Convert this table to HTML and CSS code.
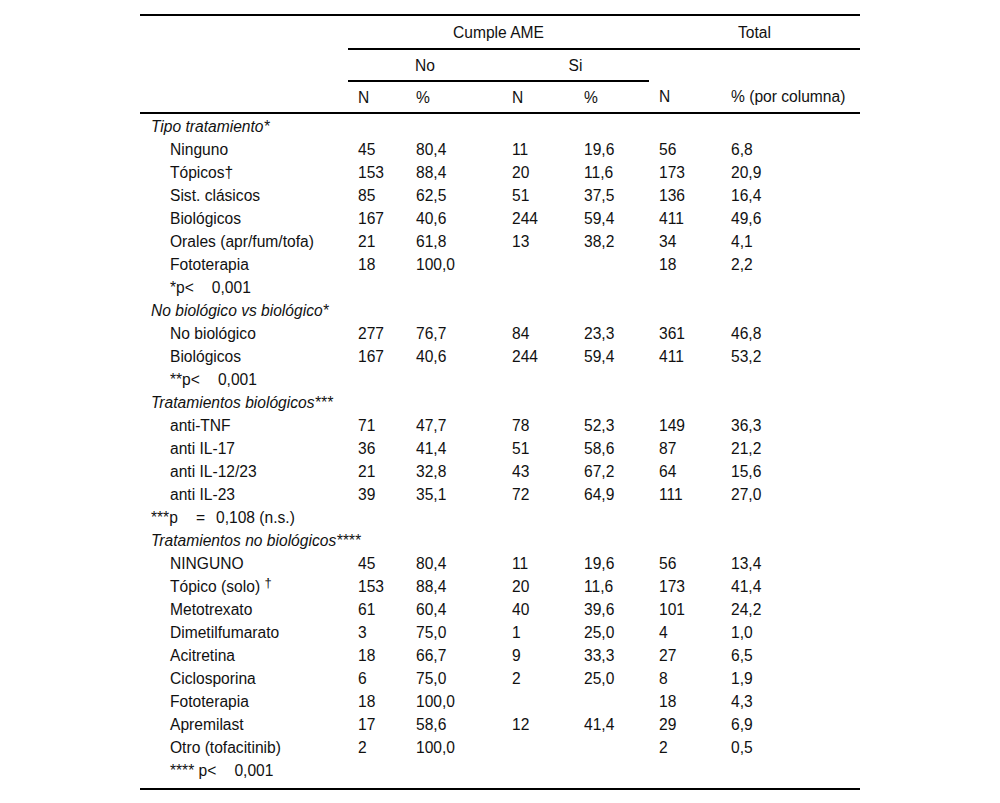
FILE: index.html
```html
<!DOCTYPE html>
<html lang="es">
<head>
<meta charset="utf-8">
<link rel="stylesheet" href="styles.css">
</head>
<body>
<table class="tbl">
  <colgroup>
    <col class="c-label"><col class="c-n1"><col class="c-p1"><col class="c-n2"><col class="c-p2"><col class="c-n3"><col class="c-p3">
  </colgroup>
  <thead>
    <tr class="h1">
      <th></th>
      <th colspan="4" class="ctr line">Cumple AME</th>
      <th colspan="2" class="ctr line">Total</th>
    </tr>
    <tr class="h2">
      <th></th>
      <th colspan="2" class="ctr line">No</th>
      <th colspan="2" class="ctr line">Si</th>
      <th colspan="2"></th>
    </tr>
    <tr class="h3">
      <th></th>
      <th>N</th><th>%</th><th>N</th><th>%</th><th>N</th><th>% (por columna)</th>
    </tr>
  </thead>
  <tbody>
    <tr><td class="grp" colspan="7">Tipo tratamiento*</td></tr>
    <tr><td class="item">Ninguno</td><td>45</td><td>80,4</td><td>11</td><td>19,6</td><td>56</td><td>6,8</td></tr>
    <tr><td class="item">Tópicos†</td><td>153</td><td>88,4</td><td>20</td><td>11,6</td><td>173</td><td>20,9</td></tr>
    <tr><td class="item">Sist. clásicos</td><td>85</td><td>62,5</td><td>51</td><td>37,5</td><td>136</td><td>16,4</td></tr>
    <tr><td class="item">Biológicos</td><td>167</td><td>40,6</td><td>244</td><td>59,4</td><td>411</td><td>49,6</td></tr>
    <tr><td class="item">Orales (apr/fum/tofa)</td><td>21</td><td>61,8</td><td>13</td><td>38,2</td><td>34</td><td>4,1</td></tr>
    <tr><td class="item">Fototerapia</td><td>18</td><td>100,0</td><td></td><td></td><td>18</td><td>2,2</td></tr>
    <tr><td class="item" colspan="7"><span class="pk">*p&lt;</span><span class="pv">0,001</span></td></tr>
    <tr><td class="grp" colspan="7">No biológico vs biológico*</td></tr>
    <tr><td class="item">No biológico</td><td>277</td><td>76,7</td><td>84</td><td>23,3</td><td>361</td><td>46,8</td></tr>
    <tr><td class="item">Biológicos</td><td>167</td><td>40,6</td><td>244</td><td>59,4</td><td>411</td><td>53,2</td></tr>
    <tr><td class="item" colspan="7"><span class="pk">**p&lt;</span><span class="pv">0,001</span></td></tr>
    <tr><td class="grp" colspan="7">Tratamientos biológicos***</td></tr>
    <tr><td class="item">anti-TNF</td><td>71</td><td>47,7</td><td>78</td><td>52,3</td><td>149</td><td>36,3</td></tr>
    <tr><td class="item">anti IL-17</td><td>36</td><td>41,4</td><td>51</td><td>58,6</td><td>87</td><td>21,2</td></tr>
    <tr><td class="item">anti IL-12/23</td><td>21</td><td>32,8</td><td>43</td><td>67,2</td><td>64</td><td>15,6</td></tr>
    <tr><td class="item">anti IL-23</td><td>39</td><td>35,1</td><td>72</td><td>64,9</td><td>111</td><td>27,0</td></tr>
    <tr><td class="note" colspan="7"><span class="pk">***p</span><span class="eq">=</span><span class="pv2">0,108 (n.s.)</span></td></tr>
    <tr><td class="grp" colspan="7">Tratamientos no biológicos****</td></tr>
    <tr><td class="item">NINGUNO</td><td>45</td><td>80,4</td><td>11</td><td>19,6</td><td>56</td><td>13,4</td></tr>
    <tr><td class="item">Tópico (solo) <sup>†</sup></td><td>153</td><td>88,4</td><td>20</td><td>11,6</td><td>173</td><td>41,4</td></tr>
    <tr><td class="item">Metotrexato</td><td>61</td><td>60,4</td><td>40</td><td>39,6</td><td>101</td><td>24,2</td></tr>
    <tr><td class="item">Dimetilfumarato</td><td>3</td><td>75,0</td><td>1</td><td>25,0</td><td>4</td><td>1,0</td></tr>
    <tr><td class="item">Acitretina</td><td>18</td><td>66,7</td><td>9</td><td>33,3</td><td>27</td><td>6,5</td></tr>
    <tr><td class="item">Ciclosporina</td><td>6</td><td>75,0</td><td>2</td><td>25,0</td><td>8</td><td>1,9</td></tr>
    <tr><td class="item">Fototerapia</td><td>18</td><td>100,0</td><td></td><td></td><td>18</td><td>4,3</td></tr>
    <tr><td class="item">Apremilast</td><td>17</td><td>58,6</td><td>12</td><td>41,4</td><td>29</td><td>6,9</td></tr>
    <tr><td class="item">Otro (tofacitinib)</td><td>2</td><td>100,0</td><td></td><td></td><td>2</td><td>0,5</td></tr>
    <tr class="last"><td class="item" colspan="7"><span class="pk">**** p&lt;</span><span class="pv">0,001</span></td></tr>
  </tbody>
</table>
</body>
</html>
```
FILE: styles.css
```css
html, body {
  margin: 0;
  padding: 0;
  background: #fff;
}
body {
  font-family: "Liberation Sans", Arial, sans-serif;
  font-size: 15.6px;
  color: #111;
}
.tbl {
  border-collapse: collapse;
  width: 720px;
  margin: 14px auto 0;
  table-layout: fixed;
  border-top: 2px solid #000;
  border-bottom: 2px solid #000;
}
.c-label { width: 208px; }
.c-n1 { width: 58px; }
.c-p1 { width: 96px; }
.c-n2 { width: 72px; }
.c-p2 { width: 75px; }
.c-n3 { width: 72px; }
.c-p3 { width: 139px; }
th, td {
  padding: 0 0 0 10px;
  text-align: left;
  font-weight: normal;
  white-space: nowrap;
  line-height: 17px;
}
thead th { vertical-align: middle; }
thead tr.h1 th { height: 32px; }
thead tr.h2 th { height: 30px; }
thead tr.h3 th { height: 30px; border-bottom: 2px solid #000; }
th.ctr { text-align: center; padding-left: 0; }
th.line { border-bottom: 2px solid #000; }
tbody td { height: 23px; padding-top: 0; padding-bottom: 0; }
tbody tr:first-child td { padding-top: 1px; }
tbody tr.last td { height: 26px; vertical-align: top; padding-top: 3px; }
td.grp { font-style: italic; padding-left: 11px; }
td.item { padding-left: 30px; }
td.note { padding-left: 11px; }
.pv { margin-left: 18px; }
.eq { margin-left: 18px; }
.pv2 { margin-left: 11px; }
sup { font-size: 13px; line-height: 0; vertical-align: 5px; }
```
